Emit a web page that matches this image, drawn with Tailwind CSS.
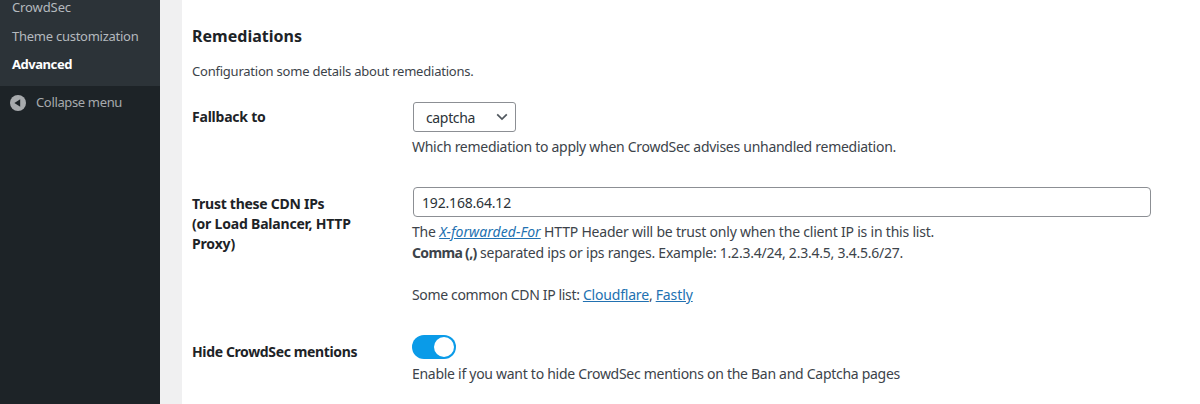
<!DOCTYPE html>
<html lang="en">
<head>
<meta charset="utf-8">
<title>CrowdSec – Advanced</title>
<script src="https://cdn.jsdelivr.net/npm/@tailwindcss/browser@4"></script>
</head>
<body class="flex h-[404px] overflow-hidden bg-[#f0f0f1] font-['Noto_Sans',sans-serif] text-sm text-[#3c434a]">
  <nav class="w-40 shrink-0 bg-[#1d2327] text-[13px] leading-[18px] whitespace-nowrap">
    <ul class="-mt-0.5 flex h-22 flex-col bg-[#2c3338] pl-3 text-[#b4b9be]">
      <li class="tracking-[-0.107px]">CrowdSec</li>
      <li class="mt-[11px] tracking-[-0.257px]">Theme customization</li>
      <li class="mt-2.5 font-bold tracking-[-0.45px] text-white">Advanced</li>
    </ul>
    <div class="mt-[7px] flex items-center pl-2.5 text-[#a7aaad]">
      <svg class="mr-2.5 size-4 translate-y-px" viewBox="0 0 16 16"><circle cx="8" cy="8" r="8" fill="#a7aaad"/><path d="M10.2 4.2v7.6L4.4 8z" fill="#1d2327"/></svg>
      <span class="tracking-[-0.352px]">Collapse menu</span>
    </div>
  </nav>

  <main class="ml-[22px] grow bg-white pl-2.5">
    <h2 class="mt-6 text-base leading-6 font-bold tracking-[0.02px] text-[#1d2327]">Remediations</h2>
    <p class="mt-3.5 text-[13px] leading-[18px] tracking-[-0.223px]">Configuration some details about remediations.</p>

    <div class="mt-[22px] flex">
      <div class="w-[220px] shrink-0 pt-[5px] leading-5 font-bold tracking-[-0.22px] text-[#1d2327]">Fallback to</div>
      <div>
        <div class="ml-px flex h-[30px] w-[103px] items-center justify-between rounded-[3px] border border-[#8c8f94] pr-[7px] pl-3 text-[#2c3338]">
          <span class="pt-0.5 tracking-[-0.352px]">captcha</span>
          <svg class="h-2 w-3" viewBox="0 0 12 8" fill="none" stroke="#50575e" stroke-width="1.7"><path d="M1.2 1.3L6 6.1l4.8-4.8"/></svg>
        </div>
        <p class="mt-1 leading-[21px] tracking-[-0.278px]">Which remediation to apply when CrowdSec advises unhandled remediation.</p>
      </div>
    </div>

    <div class="mt-[30px] flex">
      <div class="w-[220px] shrink-0 pt-[7px] leading-5 font-bold text-[#1d2327]">
        <span class="tracking-[-0.27px]">Trust these CDN IPs</span><br>
        <span class="tracking-[-0.2px]">(or Load Balancer, HTTP</span><br>
        <span class="tracking-[-0.16px]">Proxy)</span>
      </div>
      <div>
        <div class="ml-px flex h-[30px] w-[738px] items-center rounded-[4px] border border-[#8c8f94] pt-0.5 pl-2 text-[#2c3338] tracking-[-0.18px]">192.168.64.12</div>
        <p class="mt-1 leading-[21px]">
          <span class="tracking-[-0.2px]">The </span><a class="text-[#2271b1] italic underline tracking-[0.05px]">X-forwarded-For</a><span class="tracking-[-0.209px]"> HTTP Header will be trust only when the client IP is in this list.</span><br>
          <b class="font-bold tracking-[-0.66px]">Comma (,)</b><span class="tracking-[-0.239px]"> separated ips or ips ranges. Example: 1.2.3.4/24, 2.3.4.5, 3.4.5.6/27.</span><br>
          <br>
          <span class="tracking-[-0.345px]">Some common CDN IP list: </span><a class="text-[#2271b1] underline tracking-[-0.187px]">Cloudflare</a><span class="tracking-[-0.3px]">, </span><a class="text-[#2271b1] underline tracking-[-0.105px]">Fastly</a>
        </p>
      </div>
    </div>

    <div class="mt-[30px] flex">
      <div class="w-[220px] shrink-0 pt-[7px] leading-5 font-bold tracking-[-0.37px] text-[#1d2327]">Hide CrowdSec mentions</div>
      <div>
        <div class="flex h-6 w-11 items-center justify-end rounded-full bg-[#0a9be8] pr-0.5"><div class="size-5 rounded-full bg-white"></div></div>
        <p class="mt-1 leading-[21px] tracking-[-0.282px]">Enable if you want to hide CrowdSec mentions on the Ban and Captcha pages</p>
      </div>
    </div>
  </main>
</body>
</html>
